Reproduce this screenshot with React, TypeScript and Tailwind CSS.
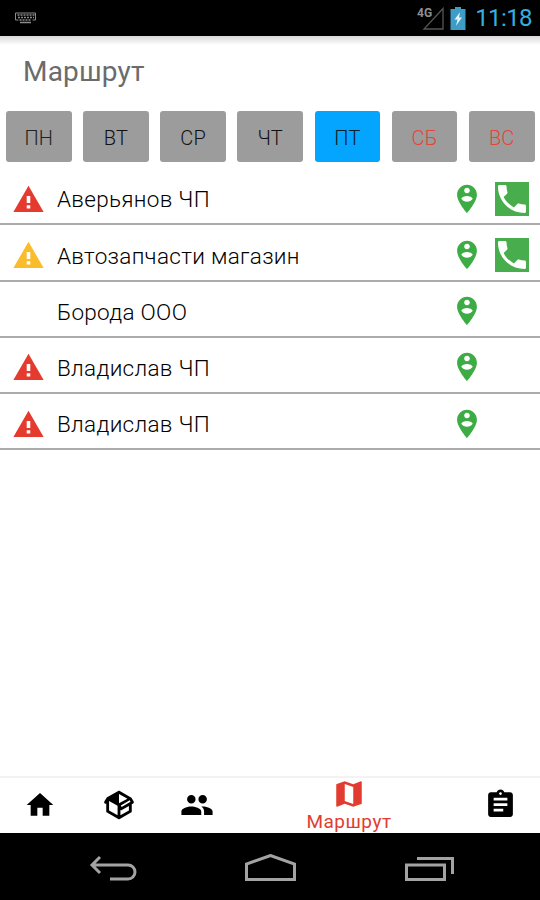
type Level = 'danger' | 'warning' | null;

interface Client {
  name: string;
  level: Level;
  hasPhone: boolean;
}

interface IconProps {
  path: string;
  className?: string;
  viewBox?: string;
}

const ICONS = {
  warning: 'M1 21h22L12 2 1 21zm12.300-2.500h-2.600v-2.300h2.600v2.300zm0-4h-2.600v-5h2.600v5z',
  pin: 'M12 2C8.14 2 5 5.14 5 9c0 5.25 7 13 7 13s7-7.75 7-13c0-3.86-3.14-7-7-7zm0 2c1.1 0 2 .9 2 2 0 1.11-.9 2-2 2s-2-.89-2-2c0-1.1.9-2 2-2zm0 10c-1.67 0-3.14-.85-4-2.15.02-1.32 2.67-2.05 4-2.05s3.98.73 4 2.05c-.86 1.3-2.33 2.15-4 2.15z',
  phone: 'M6.62 10.79c1.44 2.83 3.76 5.14 6.59 6.59l2.2-2.2c.27-.27.67-.36 1.02-.24 1.12.37 2.33.57 3.57.57.55 0 1 .45 1 1V20c0 .55-.45 1-1 1-9.39 0-17-7.61-17-17 0-.55.45-1 1-1h3.5c.55 0 1 .45 1 1 0 1.25.2 2.45.57 3.57.11.35.03.74-.25 1.02l-2.2 2.2z',
  home: 'M10 20v-6h4v6h5v-8h3L12 3 2 12h3v8z',
  box: 'M2,10.96C1.5,10.68 1.35,10.07 1.63,9.59L3.13,7C3.24,6.8 3.41,6.66 3.6,6.58L11.43,2.18C11.59,2.06 11.79,2 12,2C12.21,2 12.41,2.06 12.57,2.18L20.47,6.62C20.66,6.72 20.82,6.88 20.91,7.08L22.36,9.6C22.64,10.08 22.47,10.69 22,10.96L21,11.54V16.5C21,16.88 20.79,17.21 20.47,17.38L12.57,21.82C12.41,21.94 12.21,22 12,22C11.79,22 11.59,21.94 11.43,21.82L3.53,17.38C3.21,17.21 3,16.88 3,16.5V10.96C2.7,11.13 2.32,11.14 2,10.96M12,4.15V10.85L17.96,7.5L12,4.15M5,15.91L11,19.29V12.58L5,9.21V15.91M19,15.91V12.69L14,15.59C13.67,15.77 13.3,15.76 13,15.6V19.29L19,15.91M13.85,13.36L20.13,9.73L19.55,8.72L13.27,12.35L13.85,13.36Z',
  people: 'M16 11c1.66 0 2.99-1.34 2.99-3S17.66 5 16 5c-1.66 0-3 1.34-3 3s1.34 3 3 3zm-8 0c1.66 0 2.99-1.34 2.99-3S9.66 5 8 5C6.34 5 5 6.34 5 8s1.34 3 3 3zm0 2c-2.33 0-7 1.17-7 3.5V19h14v-2.5c0-2.33-4.67-3.5-7-3.5zm8 0c-.29 0-.62.02-.97.05 1.16.84 1.97 1.97 1.97 3.45V19h6v-2.5c0-2.33-4.67-3.5-7-3.5z',
  map: 'M20.5 3l-.16.03L15 5.1 9 3 3.36 4.9c-.21.07-.36.25-.36.48V20.5c0 .28.22.5.5.5l.16-.03L9 18.9l6 2.1 5.64-1.9c.21-.07.36-.25.36-.48V3.5c0-.28-.22-.5-.5-.5zM15 19l-6-2.11V5l6 2.11V19z',
  tasks: 'M19 3h-4.18C14.4 1.84 13.3 1 12 1c-1.3 0-2.4.84-2.82 2H5c-1.1 0-2 .9-2 2v14c0 1.1.9 2 2 2h14c1.1 0 2-.9 2-2V5c0-1.1-.9-2-2-2zm-7 0c.55 0 1 .45 1 1s-.45 1-1 1-1-.45-1-1 .45-1 1-1zm2 14H7v-2h7v2zm3-4H7v-2h10v2zm0-4H7V7h10v2z',
};

const DAYS = [
  { label: 'ПН', className: 'bg-[#9c9c9c] text-[#222]' },
  { label: 'ВТ', className: 'bg-[#9c9c9c] text-[#111]' },
  { label: 'СР', className: 'bg-[#9c9c9c] text-[#111]' },
  { label: 'ЧТ', className: 'bg-[#9c9c9c] text-[#111]' },
  { label: 'ПТ', className: 'bg-[#03a5fe] text-[#071c2a]' },
  { label: 'СБ', className: 'bg-[#9c9c9c] text-[#e2453a]' },
  { label: 'ВС', className: 'bg-[#9c9c9c] text-[#e2453a]' },
];

const CLIENTS: Client[] = [
  { name: 'Аверьянов ЧП', level: 'danger', hasPhone: true },
  { name: 'Автозапчасти магазин', level: 'warning', hasPhone: true },
  { name: 'Борода ООО', level: null, hasPhone: false },
  { name: 'Владислав ЧП', level: 'danger', hasPhone: false },
  { name: 'Владислав ЧП', level: 'danger', hasPhone: false },
];

function Icon({ path, className, viewBox = '0 0 24 24' }: IconProps) {
  return (
    <svg className={className} viewBox={viewBox} fill="currentColor">
      <path d={path} />
    </svg>
  );
}

function StatusBar() {
  return (
    <div className="h-9 shrink-0 bg-black flex items-center pl-[15px] pr-2">
      <svg className="w-[21px] h-[12px]" viewBox="0 0 21 12" fill="none" stroke="#8c8c8c">
        <path d="M.5 1h20v7h-3M.5 1v7h3" strokeWidth="1" />
        <path d="M2.5 3h17M3 5.5h16M4.5 8h12" strokeWidth="1.5" strokeDasharray="2 1" />
        <path d="M5 10.5h11" strokeWidth="1.5" />
      </svg>
      <div className="ml-auto flex items-center">
        <svg className="w-[27px] h-[24px]" viewBox="0 0 27 24">
          <path d="M7 23H26V2.500Z" fill="none" stroke="#555" strokeWidth="1.300" />
          <text x="0" y="11" fontSize="12" fontWeight="700" fill="#8f8f8f" fontFamily="Roboto, sans-serif">
            4G
          </text>
        </svg>
        <svg className="ml-[6px] w-[16px] h-[23px]" viewBox="0 0 16 22" preserveAspectRatio="none">
          <path d="M5 0h6v2h4.500v20H.5V2H5z" fill="#3d9dc6" />
          <path d="M10 5 4.500 12h3L6 18l6-8H9z" fill="#e4f5fc" />
        </svg>
        <span className="ml-[9px] text-[24px] leading-9 tracking-[-0.600px] text-[#33b0e0]">11:18</span>
      </div>
    </div>
  );
}

function ClientRow({ client }: { client: Client }) {
  return (
    <div className="h-[56.200px] flex items-center border-b-2 border-[#ababab] pl-[13px] pr-[11px] pt-[5px]">
      <div className="w-[44px] pt-px">
        {client.level && (
          <Icon
            path={ICONS.warning}
            className={client.level === 'danger' ? 'size-[33px] -ml-px text-[#e53b2e]' : 'size-[33px] -ml-px text-[#fbbc2c]'}
          />
        )}
      </div>
      <span className="text-[22.500px] leading-8 font-light tracking-[0.300px] text-black pt-px">{client.name}</span>
      <Icon path={ICONS.pin} className="ml-auto w-[34px] h-[34px] text-[#3dac45]" />
      <div className="ml-[11px] w-[34px] h-[34px]">
        {client.hasPhone && (
          <div className="size-full bg-[#48ae4d] text-white">
            <Icon path={ICONS.phone} viewBox="1.1 1.1 21.8 21.8" className="size-full" />
          </div>
        )}
      </div>
    </div>
  );
}

function TabBar() {
  return (
    <div className="h-[57px] shrink-0 border-t-2 border-[#f3f3f3] flex items-center text-black">
      <div className="w-[79px] flex justify-center pb-px">
        <Icon path={ICONS.home} className="w-[32px] h-[32px]" />
      </div>
      <div className="w-[79px] flex justify-center pb-px">
        <Icon path={ICONS.box} className="w-[34px] h-[34px]" />
      </div>
      <div className="w-[79px] flex justify-center pb-px pr-px">
        <Icon path={ICONS.people} className="w-[34px] h-[34px]" />
      </div>
      <div className="w-[224px] h-full flex flex-col items-center text-[#e23c31]">
        <Icon path={ICONS.map} className="w-[34px] h-[34px] -mt-px shrink-0" />
        <span className="text-[19px] leading-[22px] tracking-[0.500px]">Маршрут</span>
      </div>
      <div className="w-[79px] flex justify-center pb-[2px]">
        <Icon path={ICONS.tasks} className="w-[33px] h-[33px]" />
      </div>
    </div>
  );
}

function SystemNav() {
  return (
    <div className="h-[67px] shrink-0 bg-black flex items-center justify-between pl-[88px] pr-[85px] pt-[4px]">
      <svg className="w-[50px] h-[30px]" viewBox="0 0 50 30" fill="none" stroke="#a3a3a3" strokeWidth="3">
        <path d="M12 3 4 11l8 8M4 11h36a7 7 0 0 1 0 14H22" />
      </svg>
      <svg className="w-[54px] h-[30px]" viewBox="0 0 54 30" fill="none" stroke="#a3a3a3" strokeWidth="3">
        <path d="M2.500 25.500V10L26.500 1.500 50.500 10v15.500Z" />
      </svg>
      <svg className="w-[52px] h-[30px]" viewBox="0 0 52 30" fill="none" stroke="#a3a3a3" strokeWidth="3">
        <path d="M3.500 11h38v14.500h-38ZM14 4.500h35.500V20" />
      </svg>
    </div>
  );
}

export default function App() {
  return (
    <div className="w-[540px] h-[900px] flex flex-col bg-white font-['Roboto',sans-serif] overflow-hidden">
      <StatusBar />
      <header className="h-[75px] shrink-0 pl-[23px] pt-[15px] bg-linear-to-b from-[#d8d8d8] via-white via-12% to-white">
        <h1 className="text-[28px] leading-[41px] tracking-[0.200px] text-[#6b6b6b]">Маршрут</h1>
      </header>

      <div className="h-[58.300px] shrink-0 flex items-start gap-[11.600px] pl-[6px] pr-[5.500px]">
        {DAYS.map((day) => (
          <button
            key={day.label}
            className={`flex-1 h-[51px] pt-[2px] rounded-[3px] text-[20px] font-light tracking-[0.200px] ${day.className}`}
          >
            {day.label}
          </button>
        ))}
      </div>

      <main className="flex-1">
        {CLIENTS.map((client, index) => (
          <ClientRow key={index} client={client} />
        ))}
      </main>

      <TabBar />
      <SystemNav />
    </div>
  );
}
